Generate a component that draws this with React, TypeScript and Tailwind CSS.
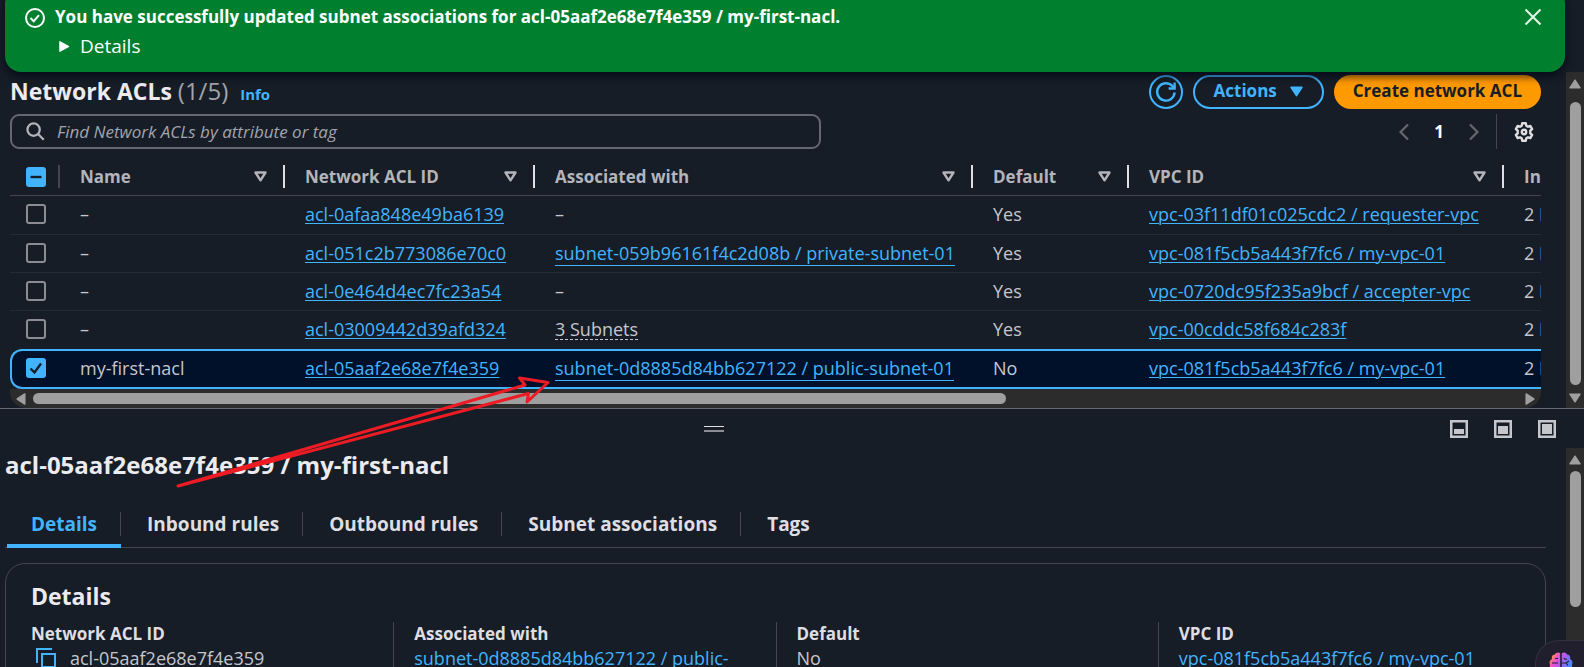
import React from "react";

type Row = {
  name: string;
  id: string;
  associated: string;
  kind: "none" | "link" | "popover";
  isDefault: string;
  vpc: string;
  selected?: boolean;
};

const rows: Row[] = [
  { name: "–", id: "acl-0afaa848e49ba6139", associated: "–", kind: "none", isDefault: "Yes", vpc: "vpc-03f11df01c025cdc2 / requester-vpc" },
  { name: "–", id: "acl-051c2b773086e70c0", associated: "subnet-059b96161f4c2d08b / private-subnet-01", kind: "link", isDefault: "Yes", vpc: "vpc-081f5cb5a443f7fc6 / my-vpc-01" },
  { name: "–", id: "acl-0e464d4ec7fc23a54", associated: "–", kind: "none", isDefault: "Yes", vpc: "vpc-0720dc95f235a9bcf / accepter-vpc" },
  { name: "–", id: "acl-03009442d39afd324", associated: "3 Subnets", kind: "popover", isDefault: "Yes", vpc: "vpc-00cddc58f684c283f" },
  { name: "my-first-nacl", id: "acl-05aaf2e68e7f4e359", associated: "subnet-0d8885d84bb627122 / public-subnet-01", kind: "link", isDefault: "No", vpc: "vpc-081f5cb5a443f7fc6 / my-vpc-01", selected: true },
];

const columns = ["Name", "Network ACL ID", "Associated with", "Default", "VPC ID"];
const tabs = ["Details", "Inbound rules", "Outbound rules", "Subnet associations", "Tags"];

function Arrow({ className }: { className: string }) {
  return (
    <svg viewBox="0 0 12 10" className={className} fill="currentColor" stroke="currentColor" strokeWidth="1.5" strokeLinejoin="round" aria-hidden="true">
      <path d="M6 1.2 11 8.8H1z" />
    </svg>
  );
}

function VerticalScrollbar({ thumb, downArrow }: { thumb: string; downArrow?: boolean }) {
  return (
    <div className="flex w-[18px] shrink-0 flex-col items-center bg-[#2c2c2c] pt-[7px] text-[#9f9f9f]" aria-hidden="true">
      <Arrow className="h-[10px] w-3 shrink-0" />
      <div className={"w-[11px] shrink-0 rounded-full bg-[#9f9f9f] " + thumb} />
      {downArrow && <Arrow className="mt-2 h-[10px] w-3 shrink-0 rotate-180" />}
    </div>
  );
}

function Checkbox({ label, state }: { label: string; state: "on" | "off" | "mixed" }) {
  return (
    <label className="relative block size-5">
      <input
        type="checkbox"
        aria-label={label}
        defaultChecked={state !== "off"}
        className="block size-5 appearance-none rounded-[3px] border-2 border-[#8c8c94] checked:border-[#42b4ff] checked:bg-[#42b4ff]"
      />
      {state !== "off" && (
        <svg viewBox="0 0 20 20" className="pointer-events-none absolute inset-0 size-5" fill="none" stroke="#161d26" strokeWidth="2.400" aria-hidden="true">
          <path d={state === "mixed" ? "M4.500 10h11" : "m4.500 10.500 4 4 6.500-9"} />
        </svg>
      )}
    </label>
  );
}

function PanelIcon({ top }: { top: number }) {
  return (
    <svg viewBox="0 0 18 18" className="size-[18px]" fill="none" aria-hidden="true">
      <rect x="1.250" y="1.250" width="15.500" height="15.500" stroke="currentColor" strokeWidth="2.500" />
      <rect x="4" y={top} width="10" height={14 - top} fill="currentColor" />
    </svg>
  );
}

const link = "text-[#42b4ff] underline decoration-1 underline-offset-2";
const linkBorder = "border-b border-[#42b4ff] text-[#42b4ff]";
const term = "text-[17px] font-bold text-[#dedee3]";

export default function App() {
  return (
    <div className="relative flex h-screen flex-col overflow-hidden bg-[#161d26] font-['Open_Sans','Noto_Sans',sans-serif] text-[18px] leading-6 text-[#c6c6cd]">
      <section role="status" className="relative z-10 -mt-3 mr-[19px] ml-[5px] flex h-[84px] shrink-0 items-start rounded-2xl bg-[#00802f] pt-[17px] pr-[23px] pl-5 text-white shadow-[0_4px_10px_rgba(0,7,22,0.8)]">
        <svg viewBox="0 0 20 20" className="mt-[3px] size-5 shrink-0" fill="none" stroke="currentColor" strokeWidth="2" aria-hidden="true">
          <circle cx="10" cy="10" r="9" />
          <path d="m5.500 10 3.200 3.200 5.300-6" />
        </svg>
        <div className="min-w-0 flex-1 pl-[10px]">
          <p className="text-[17px] font-bold">You have successfully updated subnet associations for acl-05aaf2e68e7f4e359 / my-first-nacl.</p>
          <button type="button" className="mt-[5px] flex items-center pl-1 font-medium">
            <svg viewBox="0 0 12 12" className="mr-[10px] h-[13px] w-[11px]" fill="currentColor" stroke="currentColor" strokeWidth="1.500" strokeLinejoin="round" aria-hidden="true">
              <path d="M1 .8v10.400L10.500 6z" />
            </svg>
            <span className="text-[19px]">Details</span>
          </button>
        </div>
        <button type="button" aria-label="Dismiss" className="mt-[3px] text-[#e6f5ea]">
          <svg viewBox="0 0 18 18" className="size-[18px]" fill="none" stroke="currentColor" strokeWidth="2" aria-hidden="true">
            <path d="m1.500 1.500 15 15M16.500 1.500l-15 15" />
          </svg>
        </button>
      </section>

      <main className="flex shrink-0 border-b border-[#656871]">
        <div className="min-w-0 flex-1 pr-[25px] pl-[10px]">
          <header className="flex items-center pt-[3px]">
            <h1 className="pb-[2px] text-[23px] font-bold text-[#ebebf0]">
              Network ACLs <span className="text-[24px] font-normal text-[#a4a4ad]">(1/5)</span>
            </h1>
            <a href="#info" className="mt-1 ml-3 text-[15px] font-bold text-[#42b4ff]">Info</a>
            <div className="ml-auto flex gap-[10px] text-[17px] font-bold">
              <button type="button" aria-label="Refresh" className="flex size-[34px] items-center justify-center rounded-full border-2 border-[#42b4ff] text-[#42b4ff]">
                <svg viewBox="0 0 20 20" className="size-5" fill="none" stroke="currentColor" strokeWidth="2.400" aria-hidden="true">
                  <path d="M18.600 10.500a8.700 8.700 0 1 1-2.300-6.500l2.100 2.200" />
                  <path d="M18.600.500v6h-6" />
                </svg>
              </button>
              <button type="button" className="flex h-[34px] items-center gap-[13px] rounded-full border-2 border-[#42b4ff] px-[19px] pb-[2px] text-[#42b4ff]">
                Actions
                <Arrow className="h-[11px] w-[13px] rotate-180" />
              </button>
              <button type="button" className="h-[34px] rounded-full bg-[#ff9900] px-[19px] pb-[2px] text-[#161d26]">Create network ACL</button>
            </div>
          </header>

          <div className="mt-[5px] flex items-center">
            <label className="flex h-[35px] w-[53%] items-center gap-3 rounded-[9px] border-2 border-[#656871] px-[14px]">
              <svg viewBox="0 0 20 20" className="size-[19px] shrink-0 text-[#b4b4bb]" fill="none" stroke="currentColor" strokeWidth="2.400" aria-hidden="true">
                <circle cx="8" cy="8" r="6.500" />
                <path d="m12.700 12.700 6 6" />
              </svg>
              <input type="search" aria-label="Find Network ACLs" placeholder="Find Network ACLs by attribute or tag" className="w-full bg-transparent text-[17px] italic outline-none placeholder:text-[#a4a4ad]" />
            </label>
            <nav aria-label="Pagination" className="ml-auto flex items-center text-[#656871]">
              <button type="button" aria-label="Previous page">
                <svg viewBox="0 0 10 18" className="h-[18px] w-[10px]" fill="none" stroke="currentColor" strokeWidth="2.200"><path d="M9 1.500 1.500 9 9 16.500" /></svg>
              </button>
              <button type="button" aria-current="page" className="mx-[25px] text-[17px] font-bold text-white">1</button>
              <button type="button" aria-label="Next page">
                <svg viewBox="0 0 10 18" className="h-[18px] w-[10px]" fill="none" stroke="currentColor" strokeWidth="2.200"><path d="M1 1.500 8.500 9 1 16.500" /></svg>
              </button>
            </nav>
            <div className="ml-[17px] flex h-[35px] items-center border-l border-[#424650] pr-[7px] pl-[17px]">
              <button type="button" aria-label="Preferences" className="text-[#dedee3]">
                <svg viewBox="0 0 20 20" className="size-5" fill="none" stroke="currentColor" strokeWidth="2.400" strokeLinejoin="round">
                  <path d="M8.200 1.300h3.600l.5 2.400 1.700 1 2.300-.8 1.800 3.100-1.800 1.600v2.800l1.800 1.600-1.800 3.100-2.300-.8-1.700 1-.5 2.400H8.200l-.5-2.400-1.700-1-2.300.8L1.900 13l1.800-1.600V8.600L1.900 7l1.800-3.100 2.300.8 1.700-1z" />
                  <circle cx="10" cy="10" r="2.200" />
                </svg>
              </button>
            </div>
          </div>

          <div className="mt-[9px] overflow-hidden">
            <table className="w-[1700px] table-fixed border-separate border-spacing-0 text-left whitespace-nowrap">
              <colgroup>
                <col className="w-[50px]" />
                <col className="w-[225px]" />
                <col className="w-[250px]" />
                <col className="w-[438px]" />
                <col className="w-[156px]" />
                <col className="w-[375px]" />
                <col />
              </colgroup>
              <thead>
                <tr className="h-[38px] text-[17px] text-[#b4b4bb]">
                  <th className="border-b border-[#424650] p-0 pl-4">
                    <div className="flex h-[23px] items-center border-r-2 border-[#424650]">
                      <Checkbox label="Select all" state="mixed" />
                    </div>
                  </th>
                  {columns.map((c) => (
                    <th key={c} className="border-b border-[#424650] p-0 pl-5 font-bold">
                      <div className="flex h-[23px] items-center justify-between border-r-2 border-[#dedee3] pr-4">
                        {c}
                        <svg viewBox="0 0 13 11" className="h-[11px] w-[13px]" fill="none" stroke="currentColor" strokeWidth="2.400" strokeLinejoin="round" aria-hidden="true">
                          <path d="M1.500 1.500h10l-5 7.800z" />
                        </svg>
                      </div>
                    </th>
                  ))}
                  <th className="border-b border-[#424650] p-0 pl-5 font-bold">Inbound rules count</th>
                </tr>
              </thead>
              <tbody>
                {rows.map((r, i) => {
                  const edge = r.selected
                    ? "border-y-2 border-[#42b4ff] bg-[#001129]"
                    : i === rows.length - 2
                      ? "border-none"
                      : "border-b border-[#232b37]";
                  const cell = "p-0 pb-[2px] pl-5 " + edge;
                  return (
                    <tr key={r.id} className={r.selected ? "h-10" : i < 1 ? "h-[39px]" : "h-[38px]"}>
                      <td className={"p-0 pb-[2px] " + edge + (r.selected ? " rounded-l-xl border-l-2 pl-[14px]" : " pl-4")}>
                        <Checkbox label={"Select " + r.id} state={r.selected ? "on" : "off"} />
                      </td>
                      <td className={cell}>{r.name}</td>
                      <td className={cell}>
                        <a href="#acl" className={link}>{r.id}</a>
                      </td>
                      <td className={cell}>
                        {r.kind === "link" && <a href="#subnet" className={linkBorder}>{r.associated}</a>}
                        {r.kind === "popover" && <button type="button" className="border-b border-dashed border-[#c6c6cd] leading-5">{r.associated}</button>}
                        {r.kind === "none" && r.associated}
                      </td>
                      <td className={cell}>{r.isDefault}</td>
                      <td className={cell}>
                        <a href="#vpc" className={link}>{r.vpc}</a>
                      </td>
                      <td className={cell}>2 Inbound rules</td>
                    </tr>
                  );
                })}
              </tbody>
            </table>
            <div className="flex h-[19px] items-center overflow-hidden rounded-b-2xl bg-[#2c2c2c] px-[5px] text-[#9f9f9f]" aria-hidden="true">
              <Arrow className="h-[10px] w-3 -rotate-90" />
              <div className="mx-[6px] flex-1">
                <div className="h-[11px] w-[65.5%] rounded-full bg-[#9f9f9f]" />
              </div>
              <Arrow className="h-[10px] w-3 rotate-90" />
            </div>
          </div>
        </div>
        <VerticalScrollbar thumb="mt-[13px] h-[283px]" downArrow />
      </main>

      <section aria-label="Details panel" className="flex min-h-0 flex-1 flex-col">
        <div className="grid h-[39px] shrink-0 grid-cols-[1fr_auto_1fr] items-center pr-7 pl-[10px]">
          <span />
          <button type="button" aria-label="Resize panel" className="mr-[138px] flex w-5 flex-col gap-[3px] justify-self-center">
            <span className="h-px w-full bg-[#dedee3]" />
            <span className="h-[2px] w-full bg-[#8c8c94]" />
          </button>
          <div className="flex justify-end gap-[26px] pt-px text-[#c6c6cd]">
            <button type="button" aria-label="Small panel"><PanelIcon top={9} /></button>
            <button type="button" aria-label="Medium panel"><PanelIcon top={6} /></button>
            <button type="button" aria-label="Full panel"><PanelIcon top={4} /></button>
          </div>
        </div>

        <div className="flex min-h-0 flex-1">
          <div className="min-w-0 flex-1 overflow-hidden pr-5 pl-[5px]">
            <h2 className="pt-px text-[24px] leading-8 font-bold text-[#ebebf0]">acl-05aaf2e68e7f4e359 / my-first-nacl</h2>

            <div role="tablist" className="mt-[25px] flex h-[42px] border-b border-[#424650] pl-[2px] text-[19px] font-bold text-[#dedee3]">
              {tabs.map((t, i) => (
                <button
                  key={t}
                  type="button"
                  role="tab"
                  aria-selected={i === 0}
                  className={"-mb-px border-b-4 pb-[2px] " + (i === 0 ? "border-[#42b4ff] text-[#42b4ff]" : "border-transparent")}
                >
                  <span className={"flex h-6 items-center pr-[23px] " + (i === 0 ? "pl-6" : "pl-[26px]") + (i < tabs.length - 1 ? " border-r border-[#424650]" : "")}>{t}</span>
                </button>
              ))}
            </div>

            <section className="mt-[15px] h-40 rounded-[20px] border border-[#424650] px-[25px] pt-4">
              <h3 className="text-[23px] leading-8 font-bold text-[#ebebf0]">Details</h3>
              <dl className="mt-[10px] -mr-[20px] -ml-5 grid h-24 grid-cols-4">
                <div className="pl-5">
                  <dt className={term}>Network ACL ID</dt>
                  <dd className="flex items-center gap-[14px] pl-[5px]">
                    <button type="button" aria-label="Copy" className="text-[#42b4ff]">
                      <svg viewBox="0 0 20 20" className="size-5" fill="none" stroke="currentColor" strokeWidth="2"><path d="M16 1H1v14" /><path d="M6 6h13v13H6z" /></svg>
                    </button>
                    acl-05aaf2e68e7f4e359
                  </dd>
                </div>
                <div className="border-l border-[#424650] pl-5">
                  <dt className={term}>Associated with</dt>
                  <dd className="max-w-[340px]"><a href="#subnet" className={link}>subnet-0d8885d84bb627122 / public-subnet-01</a></dd>
                </div>
                <div className="border-l border-[#424650] pl-5">
                  <dt className={term}>Default</dt>
                  <dd>No</dd>
                </div>
                <div className="border-l border-[#424650] pl-5">
                  <dt className={term}>VPC ID</dt>
                  <dd><a href="#vpc" className={link}>vpc-081f5cb5a443f7fc6 / my-vpc-01</a></dd>
                </div>
              </dl>
            </section>
          </div>
          <VerticalScrollbar thumb="mt-[6px] h-[136px]" />
        </div>
      </section>

      <button type="button" aria-label="Assistant" className="absolute right-0 bottom-0 h-[27px] w-[49px] overflow-hidden rounded-tl-[24px] border-t border-l border-[#33313f] bg-[#211f2d] pt-[11px] pl-[13px]">
        <svg viewBox="0 0 24 22" className="h-[22px] w-6" aria-hidden="true">
          <defs>
            <linearGradient id="brain" x1="0" y1="0" x2="1" y2="0.5">
              <stop offset="0" stopColor="#ff9a2e" />
              <stop offset="0.12" stopColor="#ff9a2e" />
              <stop offset="0.35" stopColor="#f04fd0" />
              <stop offset="0.6" stopColor="#b05af5" />
              <stop offset="1" stopColor="#3f8cff" />
            </linearGradient>
          </defs>
          <path fill="url(#brain)" d="M11.400 1.500C10-.3 6.500.2 6 2.500 3.500 2.500 2.200 5 3 7 .8 8 0 10.500 1 12.500c-.8 3 1 5 3.400 5.200C5.500 21 9.500 22 11.400 19.500zM12.600 1.500C14-.3 17.500.2 18 2.500c2.500 0 3.800 2.500 3 4.500 2.200 1 3 3.500 2 5.500.8 3-1 5-3.400 5.200-1.100 3.300-5.100 4.300-7 1.800z" />
          <path fill="none" stroke="#211f2d" strokeWidth="1.100" d="M12 0v22M3 11h6M6 6.500h3M15 6c.500 1.500 2 1.500 3 1M13 11h4l2 2.500M17 11l3-2" />
        </svg>
      </button>

      <svg viewBox="170 370 390 125" className="pointer-events-none absolute top-[370px] left-[170px] h-[125px] w-[390px]" fill="none" stroke="#ed1c24" strokeWidth="3" strokeLinecap="round" strokeLinejoin="round" aria-hidden="true">
        <path d="M178 486 525 385 519.500 378 548 382.500 527 402 528.500 393.500 178 486z" />
      </svg>
    </div>
  );
}
